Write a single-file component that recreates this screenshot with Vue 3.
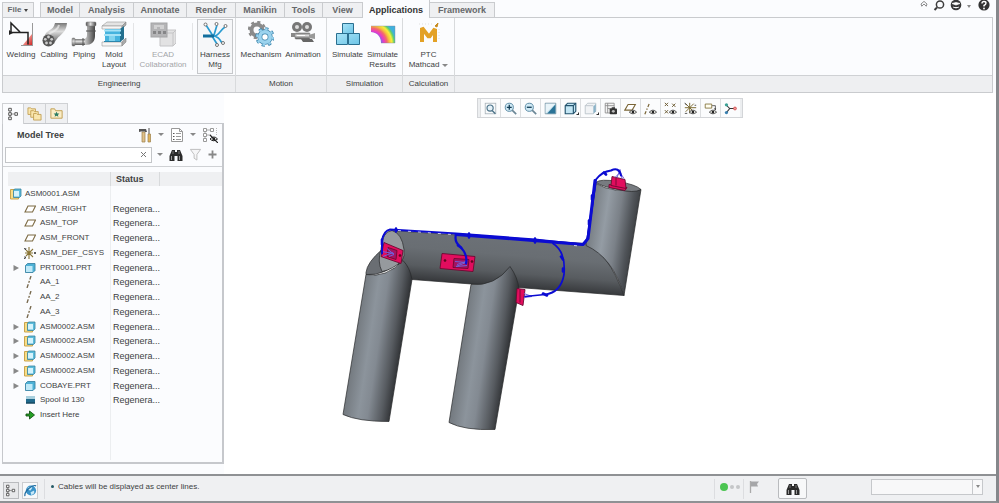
<script setup>
import { ref } from 'vue'

const tabs = [
  { name: 'Model', w: 40 }, { name: 'Analysis', w: 54 }, { name: 'Annotate', w: 53 },
  { name: 'Render', w: 49 }, { name: 'Manikin', w: 49 }, { name: 'Tools', w: 38 },
  { name: 'View', w: 40 }, { name: 'Applications', w: 67 }, { name: 'Framework', w: 65 },
]
const activeTab = ref('Applications')

const groups = [
  {
    title: 'Engineering', key: 'eng', items: [
      { lines: ['Welding'], icon: 'welding', w: 36 },
      { lines: ['Cabling'], icon: 'cabling', w: 30 },
      { lines: ['Piping'], icon: 'piping', w: 30 },
      { lines: ['Mold', 'Layout'], icon: 'mold', w: 30 },
      { sep: true },
      { lines: ['ECAD', 'Collaboration'], icon: 'ecad', w: 50, disabled: true },
      { sep: true },
      { lines: ['Harness', 'Mfg'], icon: 'harness', w: 36, boxed: true },
    ],
  },
  {
    title: 'Motion', key: 'mot', items: [
      { lines: ['Mechanism'], icon: 'gears', w: 44 },
      { lines: ['Animation'], icon: 'camera', w: 40 },
    ],
  },
  {
    title: 'Simulation', key: 'sim', items: [
      { lines: ['Simulate'], icon: 'cubes', w: 36 },
      { lines: ['Simulate', 'Results'], icon: 'rainbow', w: 34 },
    ],
  },
  {
    title: 'Calculation', key: 'calc', items: [
      { lines: ['PTC', 'Mathcad'], icon: 'mathcad', w: 46, menu: true },
    ],
  },
]

const viewTools = [
  ['refit', 'Refit'], ['zoomin', 'Zoom In'], ['zoomout', 'Zoom Out'], ['repaint', 'Repaint'],
  ['style', 'Display Style'], ['saved', 'Saved Orientations'], ['viewmgr', 'View Manager'],
  ['dplane', 'Plane Display'], ['daxis', 'Axis Display'], ['dpoint', 'Point Display'],
  ['dcsys', 'Csys Display'], ['dnote', 'Annotation Display'], ['spin', 'Spin Center'],
]

const st = 'Regenera...'
const rows = [
  { name: 'ASM0001.ASM', icon: 'asm', root: true, status: '' },
  { name: 'ASM_RIGHT', icon: 'plane', status: st },
  { name: 'ASM_TOP', icon: 'plane', status: st },
  { name: 'ASM_FRONT', icon: 'plane', status: st },
  { name: 'ASM_DEF_CSYS', icon: 'csys', status: st },
  { name: 'PRT0001.PRT', icon: 'part', status: st, open: true },
  { name: 'AA_1', icon: 'axis', status: st },
  { name: 'AA_2', icon: 'axis', status: st },
  { name: 'AA_3', icon: 'axis', status: st },
  { name: 'ASM0002.ASM', icon: 'asm', status: st, open: true },
  { name: 'ASM0002.ASM', icon: 'asm', status: st, open: true },
  { name: 'ASM0002.ASM', icon: 'asm', status: st, open: true },
  { name: 'ASM0002.ASM', icon: 'asm', status: st, open: true },
  { name: 'COBAYE.PRT', icon: 'part', status: st, open: true },
  { name: 'Spool id 130', icon: 'spool', status: st },
  { name: 'Insert Here', icon: 'insert', status: '' },
]
const query = ref('')
const filter = ref('')
</script>

<template>
  <div class="app">
    <svg class="defs" aria-hidden="true">
      <defs>
        <linearGradient id="gCube" x1="0" y1="0" x2="1" y2="1"><stop offset="0" stop-color="#a9e4f8" /><stop offset="1" stop-color="#6cc4e6" /></linearGradient>
        <linearGradient id="gMetal" x1="0" y1="0" x2="1" y2="0"><stop offset="0" stop-color="#555" /><stop offset=".45" stop-color="#ddd" /><stop offset="1" stop-color="#444" /></linearGradient>
        <linearGradient id="gMetalV" x1="0" y1="0" x2="0" y2="1"><stop offset="0" stop-color="#777" /><stop offset=".4" stop-color="#ddd" /><stop offset="1" stop-color="#555" /></linearGradient>
        <linearGradient id="gRed" x1="0" y1="0" x2="1" y2="1"><stop offset=".3" stop-color="#f7b0a8" /><stop offset="1" stop-color="#cf1f1f" /></linearGradient>
        <radialGradient id="gRain" gradientUnits="userSpaceOnUse" cx="1" cy="23" r="25"><stop offset=".3" stop-color="#5ac8f0" /><stop offset=".42" stop-color="#8a68e0" /><stop offset=".52" stop-color="#e83ac8" /><stop offset=".64" stop-color="#f26a6c" /><stop offset=".74" stop-color="#f6c23c" /><stop offset=".84" stop-color="#f8ee3c" /><stop offset=".93" stop-color="#5fd06a" /><stop offset="1" stop-color="#3fb0dd" /></radialGradient>
        <linearGradient id="gLeg" gradientUnits="userSpaceOnUse" x1="355" y1="344" x2="401" y2="351"><stop offset="0" stop-color="#757b81" /><stop offset=".3" stop-color="#8c949c" /><stop offset=".5" stop-color="#838a92" /><stop offset=".8" stop-color="#565a5f" /><stop offset="1" stop-color="#303235" /></linearGradient>
        <linearGradient id="gLeg2" gradientUnits="userSpaceOnUse" x1="460" y1="357" x2="507" y2="364"><stop offset="0" stop-color="#757b81" /><stop offset=".3" stop-color="#8c949c" /><stop offset=".5" stop-color="#838a92" /><stop offset=".8" stop-color="#565a5f" /><stop offset="1" stop-color="#303235" /></linearGradient>
        <linearGradient id="gRiser" gradientUnits="userSpaceOnUse" x1="591" y1="215" x2="637" y2="222"><stop offset="0" stop-color="#777d83" /><stop offset=".32" stop-color="#949ca4" /><stop offset=".6" stop-color="#7b8188" /><stop offset=".85" stop-color="#505459" /><stop offset="1" stop-color="#3c3f42" /></linearGradient>
        <linearGradient id="gBody" gradientUnits="userSpaceOnUse" x1="498" y1="237" x2="494" y2="287"><stop offset="0" stop-color="#6c7177" /><stop offset=".35" stop-color="#696e73" /><stop offset=".7" stop-color="#585c60" /><stop offset="1" stop-color="#35373a" /></linearGradient>
      </defs>

      <!-- ribbon icons, 26 x 26 -->
      <symbol id="welding" viewBox="0 0 26 26"><path d="M24 13v12H14z" fill="url(#gRed)" /><path d="M24.500 2v23M13 24.500h12" stroke="#999" fill="none" /><path d="M1 11.500h19v12M3 11V2l9 9" fill="none" stroke="#222" stroke-width="1.500" /><path d="M1 9v5l4-2z" fill="#222" /></symbol>
      <symbol id="cabling" viewBox="0 0 26 26"><path d="M3 16C6 7 12 11 14 2L26 2C25 14 17 13 13 23z" fill="url(#gMetalV)" /><path d="M8 13C11 10 16 11 18 4" stroke="#eee" stroke-width="2" fill="none" opacity=".7" /><circle cx="7.500" cy="19.500" r="6" fill="#555" /><g fill="#ccc"><circle cx="7.500" cy="16" r="1.400" /><circle cx="4.300" cy="18.300" r="1.400" /><circle cx="10.700" cy="18.300" r="1.400" /><circle cx="5.500" cy="22" r="1.400" /><circle cx="9.500" cy="22" r="1.400" /></g></symbol>
      <symbol id="piping" viewBox="0 0 26 26"><path d="M16 5h8v10c0 6-4 9-9 9H3v-6h9c2 0 4-1 4-4z" fill="url(#gMetal)" /><path d="M2 18h12v6H2z" fill="url(#gMetalV)" /><rect x="15" y="1" width="10" height="4" rx="1" fill="url(#gMetal)" stroke="#777" stroke-width=".5" /><rect x="1" y="17" width="3" height="8" rx="1" fill="url(#gMetalV)" stroke="#777" stroke-width=".5" /><path d="M15 10h10M12 17v8" stroke="#555" /></symbol>
      <symbol id="mold" viewBox="0 0 26 26"><path d="M1 5l5-4h19l-4 4z" fill="#e4e4e4" stroke="#999" stroke-width=".6" /><path d="M1 5h20v3H1zM1 21h20v4H1z" fill="#f6f6f6" stroke="#999" stroke-width=".6" /><path d="M21 5l4-4v3l-4 4zM21 21l4-4v4l-4 4z" fill="#aaa" stroke="#888" stroke-width=".6" /><path d="M4 8h15v13H4z" fill="#45b3de" /><path d="M19 8l4-3v13l-4 3z" fill="#23708f" /><path d="M3 9.500h17M3 14h17" stroke="#a5e2f6" stroke-width="2" /><path d="M3 20.500h17" stroke="#2c86ac" /><path d="M8 15h6v5H8z" fill="#82d4ef" /></symbol>
      <symbol id="ecad" viewBox="0 0 26 26"><path d="M10 12l4-3h12v13l-3 3H10z" fill="#e2e2e3" stroke="#c4c4c6" /><path d="M10 12h13v13M23 12l3-3" fill="none" stroke="#c4c4c6" /><rect x="1" y="2" width="16" height="14" fill="#b4b4b6" stroke="#a4a4a6" /><path d="M4 5h10M4 7h3m3 0h4" stroke="#eee" /><path d="M3 10h3v3H3zM8 10h3v3H8zM13 10h3v3h-3z" fill="#858587" /></symbol>
      <symbol id="harness" viewBox="0 0 26 26"><path d="M1 15h11c5 0 6-6 11-9M11 15L4 4M12 14L15 4M11 15c4 0 7 3 9 7M10 15l5 8" fill="none" stroke="#2a9bd0" stroke-width="1.700" /><path d="M1 15h11" stroke="#126e9d" stroke-width="3" /><g fill="#fff" stroke="#666" stroke-width=".9"><circle cx="3.500" cy="3.500" r="1.500" /><circle cx="14.500" cy="3" r="1.500" /><circle cx="23.500" cy="5" r="1.500" /><circle cx="21" cy="22" r="1.500" /><circle cx="15" cy="24" r="1.500" /></g></symbol>
      <symbol id="gears" viewBox="0 0 26 26"><circle cx="9" cy="9" r="5.500" fill="none" stroke="#8b8b8b" stroke-width="4" /><circle cx="9" cy="9" r="8" fill="none" stroke="#8b8b8b" stroke-width="2.400" stroke-dasharray="3.140 3.140" /><circle cx="17" cy="16" r="8.200" fill="none" stroke="#3b83ab" stroke-width="3" stroke-dasharray="3.200 3.230" /><circle cx="17" cy="16" r="5.200" fill="#fff" stroke="#3b83ab" stroke-width="5" /><circle cx="17" cy="16" r="5.200" fill="none" stroke="#9bd3ee" stroke-width="3.600" /><circle cx="17" cy="16" r="7.900" fill="none" stroke="#9bd3ee" stroke-width="2" stroke-dasharray="2.500 3.700" /></symbol>
      <symbol id="camera" viewBox="0 0 26 26"><circle cx="7" cy="6" r="5" fill="#777" /><circle cx="17" cy="6" r="5" fill="#777" /><circle cx="7" cy="6" r="2" fill="#ddd" /><circle cx="17" cy="6" r="2" fill="#ddd" /><rect x="5" y="12" width="15" height="6" rx="1" fill="url(#gMetalV)" stroke="#777" stroke-width=".6" /><path d="M19 14l6-2v6l-6-1z" fill="#999" /><path d="M1 12h4v4H1z" fill="#888" /><path d="M11 18h11l2 3H13z" fill="#666" /><path d="M7 14.500h8" stroke="#fff" /></symbol>
      <symbol id="cubes" viewBox="0 0 26 26"><g fill="url(#gCube)" stroke="#2a6f90"><path d="M7.500 2.500h11v10h-11z" /><path d="M1.500 12.500h11v11h-11zM13.500 12.500h11v11h-11z" /></g></symbol>
      <symbol id="rainbow" viewBox="0 0 26 26"><path d="M1 5h24v17H11c0-6-3-10-10-11z" fill="url(#gRain)" /><path d="M1 5h24v17H11" stroke="#889" fill="none" opacity=".4" /></symbol>
      <symbol id="mathcad" viewBox="0 0 26 26"><path d="M6 21V7l7 9 6-8v13" fill="none" stroke="#e3a126" stroke-width="4" stroke-linejoin="bevel" /><path d="M19 5l3-3-1 4z" fill="#c78a1e" stroke="#c78a1e" /><path d="M3 3h14M23 8v12" stroke="#ccc" stroke-width=".6" stroke-dasharray="1 2" /></symbol>

      <!-- view toolbar icons, 16 x 16 -->
      <symbol id="refit" viewBox="0 0 16 16"><rect x="1.500" y="1.500" width="13" height="13" fill="#f8fafb" stroke="#a9b3ba" /><circle cx="7.500" cy="7.500" r="3.800" fill="#e4f1f8" stroke="#4c7389" stroke-width="1.400" /><path d="M10 10.500l4 4" stroke="#4c7389" stroke-width="1.800" /></symbol>
      <symbol id="zoomin" viewBox="0 0 16 16"><circle cx="6.500" cy="6.500" r="5" fill="#cfe9f5" stroke="#5b8ba5" stroke-width="1.200" /><path d="M10 10l5 5" stroke="#6b8796" stroke-width="2" /><path d="M3.500 6.500h6M6.500 3.500v6" stroke="#123d55" stroke-width="1.600" /></symbol>
      <symbol id="zoomout" viewBox="0 0 16 16"><circle cx="6.500" cy="6.500" r="5" fill="#cfe9f5" stroke="#5b8ba5" stroke-width="1.200" /><path d="M10 10l5 5" stroke="#6b8796" stroke-width="2" /><path d="M3.500 6.500h6" stroke="#123d55" stroke-width="1.600" /></symbol>
      <symbol id="repaint" viewBox="0 0 16 16"><path d="M1.500 1.500h13v13h-13z" fill="#bfdfec" stroke="#6d8b9a" /><path d="M2 2h12L2 14z" fill="#e9f4f9" /><path d="M14 3v11H4z" fill="#2a7397" /></symbol>
      <symbol id="style" viewBox="0 0 16 16"><path d="M1.500 4.500l3-3h10v10l-3 3h-10z" fill="#c3e6f4" stroke="#23536d" stroke-width="1.400" /><path d="M1.500 4.500h10v10M11.500 4.500l3-3" fill="none" stroke="#23536d" stroke-width="1.400" /></symbol>
      <symbol id="saved" viewBox="0 0 16 16"><path d="M1.500 4.500l3-3h10v10l-3 3h-10z" fill="#f1f3f5" stroke="#b5bfc5" /><path d="M11.500 5.500v9l3-3v-9z" fill="#8bb3c8" /><path d="M1.500 4.500h10" stroke="#b6bfc5" /></symbol>
      <symbol id="viewmgr" viewBox="0 0 16 16"><path d="M1.500 1.500h11v12h-11zM1.500 4.500h11M4.500 1.500v12M4.500 8h8" fill="#f4f4f4" stroke="#888" /><rect x="7" y="8" width="9" height="7" rx="1" fill="#333" /><path d="M9.500 6.500h4v2h-4z" fill="#333" /><circle cx="11.500" cy="11.500" r="1.800" fill="#bbb" /></symbol>
      <symbol id="eye" viewBox="0 0 16 16"><path d="M6.500 12.500q4.500-5 9 0q-4.500 4-9 0z" fill="#f5f5ee" stroke="#444" stroke-width="1.100" /><circle cx="11" cy="12.300" r="1.600" fill="#222" /></symbol>
      <symbol id="dplane" viewBox="0 0 16 16"><path d="M1 10L5 3h9l-4 7z" fill="#fff" stroke="#7a6536" stroke-width="1.300" /><use href="#eye" /></symbol>
      <symbol id="daxis" viewBox="0 0 16 16"><path d="M1 15L7 1" stroke="#7a6536" stroke-width="1.500" stroke-dasharray="4 2 1.500 2" /><use href="#eye" /></symbol>
      <symbol id="dpoint" viewBox="0 0 16 16"><path d="M1 1l4 4M5 1L1 5M10 2l4 4M14 2l-4 4M1 10l4 4M5 10l-4 4" stroke="#6e5e35" stroke-width="1.200" /><use href="#eye" /></symbol>
      <symbol id="dcsys" viewBox="0 0 16 16"><path d="M7 1v13M1 7h14M2 2l10 10M12 2L2 12" stroke="#7b6a30" stroke-width="1.200" /><path d="M1 1l2 3M13 4h2M1 14h3" stroke="#333" /><use href="#eye" /></symbol>
      <symbol id="dnote" viewBox="0 0 16 16"><path d="M1.500 2.500h8v5h-8z" fill="#fffef0" stroke="#7b6a30" /><path d="M10 4.500h4v5" fill="none" stroke="#444" /><path d="M12 8l2 2 1-2z" fill="#333" /><use href="#eye" /></symbol>
      <symbol id="spin" viewBox="0 0 16 16"><path d="M3 4l4 4-4 5M7 8h6" fill="none" stroke="#333" stroke-width="1.300" /><circle cx="3" cy="3.500" r="2" fill="#3aa095" /><circle cx="3" cy="13" r="2" fill="#3a80b0" /><circle cx="13.500" cy="8" r="1.800" fill="#e99" stroke="#c33" stroke-width=".8" /></symbol>

      <!-- tree icons, 12 x 12 -->
      <symbol id="asm" viewBox="0 0 12 12"><path d="M.5 1.500h8v9.500h-8z" fill="#f9dd86" stroke="#c9a44c" /><path d="M3.500 2.500l1-1.500h6.500v7l-1.500 1.500H3.500z" fill="#5cbcdc" stroke="#37839f" stroke-width=".8" /><path d="M4 3h5v5.500H4z" fill="#d5f3fc" /></symbol>
      <symbol id="part" viewBox="0 0 12 12"><path d="M1.500 3.500l2-2h7.500v7L9 10.500H1.500z" fill="#4eb1d6" stroke="#3c86a6" stroke-width=".9" /><path d="M2 4h6.500v6H2z" fill="#bfe9f8" /></symbol>
      <symbol id="plane" viewBox="0 0 12 12"><path d="M1 9L4 3h7.500l-3 6z" fill="#fff" stroke="#7c6a43" stroke-width="1.100" /></symbol>
      <symbol id="axis" viewBox="0 0 12 12"><path d="M3 12L7 0" stroke="#75664a" stroke-width="1.300" stroke-dasharray="4 1.500 2 1.500" /></symbol>
      <symbol id="csys" viewBox="0 0 12 12"><path d="M5 0v12M1 6h8M2 3l7 7M9 2L2 9" stroke="#8a7637" stroke-width="1.100" /><path d="M0 1l2 2M2 1L1 3M0 10h2l-2 2h2M10 5l2 2M12 5l-2 2" stroke="#333" stroke-width=".8" fill="none" /></symbol>
      <symbol id="spool" viewBox="0 0 12 12"><path d="M2 2.500h9v7H2z" fill="#216a8c" /><path d="M2 2h9v3H2z" fill="#a9cfdd" /><path d="M2 9h9" stroke="#12394c" /></symbol>
      <symbol id="insert" viewBox="0 0 12 12"><path d="M2 5h3.500V2L10.500 6l-5 4V7H2z" fill="#25a025" stroke="#145214" stroke-width=".9" /></symbol>

      <!-- panel icons -->
      <symbol id="tree" viewBox="0 0 14 16"><path d="M3 3v10M3 8h5" stroke="#888" /><g fill="#fff" stroke="#444"><path d="M1.500 1.500h3v3h-3zM1.500 6.500h3v3h-3zM1.500 11.500h3v3h-3zM8.500 6.500h3v3h-3z" /></g></symbol>
      <symbol id="folders" viewBox="0 0 16 16"><g fill="#f9e6ae" stroke="#c09d50" stroke-width=".9"><path d="M1 9V2h3l1 1h4v6z" /><path d="M4 12V5h3l1 1h4v6z" /><path d="M7 15V8h3l1 1h4v6z" /></g></symbol>
      <symbol id="favs" viewBox="0 0 16 16"><path d="M2 13V3h4l1 2h7v8z" fill="#faedc6" stroke="#c09d50" /><path d="M8 6l1 2h2L9.500 9.500l.5 2-2-1-2 1 .5-2L5 8h2z" fill="#2e7d63" /></symbol>
      <symbol id="tools" viewBox="0 0 14 16"><path d="M4 5h3v10H4z" fill="#dfc08a" stroke="#9c8048" stroke-width=".7" /><path d="M1 2h7l1 3H7V4.500H3L1 5z" fill="#555" /><path d="M11 1v7" stroke="#888" stroke-width="1.500" /><path d="M10 7h2.500v8H10z" fill="#e0b45c" stroke="#9c8048" stroke-width=".7" /></symbol>
      <symbol id="list" viewBox="0 0 14 16"><path d="M1.500 1.500h8l3 3v10h-11z" fill="#fff" stroke="#999" /><path d="M9.500 1.500v3h3" fill="none" stroke="#999" /><path d="M3 6.500h1.500M3 9.500h1.500M3 12.500h1.500" stroke="#555" /><path d="M6 6.500h5M6 9.500h5M6 12.500h5" stroke="#999" /></symbol>
      <symbol id="treehide" viewBox="0 0 16 16"><path d="M3 3v10M5 3h4M5 8h4" stroke="#aaa" /><g fill="#fff" stroke="#999"><path d="M1.500 1.500h3v3h-3zM1.500 6.500h3v3h-3zM1.500 11.500h3v3h-3zM8.500 1.500h3v3h-3z" /></g><path d="M14.500 1v7" stroke="#bbb" stroke-dasharray="1 1" /><path d="M8 12q4-4 7.500 0q-4 3.500-7.500 0z" fill="#fff" stroke="#222" /><circle cx="11.800" cy="12" r="1.500" fill="#222" /><path d="M8 8l8 8" stroke="#222" stroke-width="1.200" /></symbol>
      <symbol id="bino" viewBox="0 0 14 14"><path d="M3 2h3v2h2V2h3l2.500 6v5H8.500V8h-3v5H.5V8z" fill="#2b2b2b" /><path d="M2.500 8v4M10.500 8v4" stroke="#999" /><path d="M4 3v3M10 3v3" stroke="#777" /></symbol>
      <symbol id="funnel" viewBox="0 0 14 14"><path d="M1.500 1.500h11L8.500 7v6l-3-2V7z" fill="#f6f6f7" stroke="#bbb" /></symbol>
      <symbol id="web" viewBox="0 0 14 14"><circle cx="7.500" cy="7" r="5.500" fill="#3a93c9" /><path d="M4 4q3-2 5 0l-2 3q-3 0-3-3zM7 9l4-2v3l-3 2z" fill="#c8e8f7" /><path d="M1 13C0 8 9 0 13 2" fill="none" stroke="#1f6ca0" stroke-width="1.300" /></symbol>
      <symbol id="chev" viewBox="0 0 10 8"><path d="M1 4l4-3.500L9 4M2 7l3-3 3 3M1 4l1 3M9 4L8 7" fill="none" stroke="#555" stroke-width=".9" /></symbol>
      <symbol id="search" viewBox="0 0 12 12"><circle cx="7" cy="4.500" r="3.600" fill="none" stroke="#3d3d3d" stroke-width="1.500" /><path d="M4 7.500L1.500 10" stroke="#3d3d3d" stroke-width="2" /></symbol>
      <symbol id="learn" viewBox="0 0 12 12"><circle cx="6" cy="5" r="5.300" fill="#383838" /><path d="M2 3.500l4 1.500 4-1.500-4-1zM3 7q3 2 6 0" fill="#fff" stroke="#fff" stroke-width=".7" /></symbol>
      <symbol id="help" viewBox="0 0 12 12"><circle cx="6" cy="5" r="5.600" fill="#333" /><path d="M4 3.500q0-2 2-2t2 1.600Q8 4.500 6 5.500v1" fill="none" stroke="#fff" stroke-width="1.400" /><circle cx="6" cy="8.500" r=".9" fill="#fff" /></symbol>
      <symbol id="flag" viewBox="0 0 12 14"><path d="M1.500 1v12" stroke="#aaa" stroke-width="1.300" /><path d="M2 1.500h8L8 4l1 2.500H2z" fill="#a5a6a8" /></symbol>
    </svg>

    <header class="tabbar">
      <button class="file" type="button">File<i class="tri dark"></i></button>
      <nav class="tabs">
        <button v-for="t in tabs" :key="t.name" type="button" class="tab" :class="{ active: t.name === activeTab }"
          :style="{ width: t.w + 'px' }" @click="activeTab = t.name">{{ t.name }}</button>
      </nav>
      <div class="quick">
        <button type="button" aria-label="Minimize ribbon"><svg width="8" height="6"><use href="#chev" /></svg></button>
        <button type="button" aria-label="Search commands"><svg width="12" height="12"><use href="#search" /></svg></button>
        <button type="button" class="learn" aria-label="Learning connector"><svg width="12" height="12"><use href="#learn" /></svg><i class="tri"></i></button>
        <button type="button" aria-label="Help"><svg width="12" height="12"><use href="#help" /></svg></button>
      </div>
    </header>

    <section class="ribbon">
      <div v-for="g in groups" :key="g.key" class="group" :class="g.key">
        <div class="items">
          <template v-for="(it, i) in g.items" :key="i">
            <span v-if="it.sep" class="sep"></span>
            <button v-else type="button" class="cmd" :class="{ boxed: it.boxed }" :disabled="it.disabled" :style="{ width: it.w + 'px' }">
              <svg width="26" height="26"><use :href="'#' + it.icon" /></svg>
              <span v-for="(l, n) in it.lines" :key="n" class="line">{{ l }}<i v-if="it.menu && n === 1" class="tri"></i></span>
            </button>
          </template>
        </div>
        <div class="gtitle">{{ g.title }}</div>
      </div>
      <div class="group rest"><div class="items"></div><div class="gtitle"></div></div>
    </section>

    <main class="work">
      <aside class="side">
        <div class="stabs">
          <button type="button" class="stab on" aria-label="Model tree"><svg width="13" height="14"><use href="#tree" /></svg></button>
          <button type="button" class="stab" aria-label="Folder browser"><svg width="15" height="15"><use href="#folders" /></svg></button>
          <button type="button" class="stab" aria-label="Favorites"><svg width="15" height="15"><use href="#favs" /></svg></button>
        </div>
        <div class="panel">
          <div class="phead">
            <h2>Model Tree</h2>
            <button type="button" aria-label="Settings"><svg width="14" height="16"><use href="#tools" /></svg></button>
            <i class="tri"></i>
            <button type="button" aria-label="Show"><svg width="14" height="16"><use href="#list" /></svg></button>
            <i class="tri"></i>
            <button type="button" aria-label="Hide tree"><svg width="16" height="16"><use href="#treehide" /></svg></button>
          </div>
          <div class="psearch">
            <div class="sbox">
              <input v-model="query" type="text" aria-label="Search tree" />
              <button type="button" aria-label="Clear" @click="query = ''"><svg width="7" height="7" viewBox="0 0 7 7"><path d="M1 1l5 5M6 1l-5 5" stroke="#777" /></svg></button>
            </div>
            <i class="tri"></i>
            <button type="button" aria-label="Find"><svg width="14" height="14"><use href="#bino" /></svg></button>
            <button type="button" aria-label="Filter"><svg width="13" height="13"><use href="#funnel" /></svg></button>
            <button type="button" aria-label="Add"><svg width="9" height="9" viewBox="0 0 9 9"><path d="M4.500.5v8M.5 4.500h8" stroke="#888" stroke-width="1.800" /></svg></button>
          </div>
          <div class="twrap">
            <table class="tree">
              <colgroup><col class="c1" /><col class="c2" /><col /></colgroup>
              <thead><tr><th aria-label="Name"></th><th>Status</th><th class="blank"></th></tr></thead>
              <tbody>
                <tr v-for="(r, i) in rows" :key="i">
                  <td>
                    <div class="node" :class="{ root: r.root }">
                      <span v-if="!r.root" class="exp"><svg v-if="r.open" width="6" height="6" viewBox="0 0 6 6"><path d="M.5 0L6 3 .5 6z" fill="#888" /></svg></span>
                      <svg width="12" height="12"><use :href="'#' + r.icon" /></svg>
                      <span>{{ r.name }}</span>
                    </div>
                  </td>
                  <td class="stat" colspan="2">{{ r.status }}</td>
                </tr>
              </tbody>
            </table>
            <div class="tfill"><span></span></div>
          </div>
        </div>
      </aside>

      <section class="view">
        <div class="vtools">
          <button v-for="t in viewTools" :key="t[0]" type="button" :aria-label="t[1]">
            <svg width="13" height="13"><use :href="'#' + t[0]" /></svg>
            <i v-if="t[0] === 'style' || t[0] === 'saved'" class="corner"></i>
          </button>
        </div>
        <svg class="scene" viewBox="224 119 772 355" preserveAspectRatio="xMidYMid meet" role="img" aria-label="Pipe assembly with harness">
          <g stroke="#26282a" stroke-width=".7" stroke-linejoin="round">
            <path d="M391 231L585 244Q608 252 624 296L412 280L395 262z" fill="url(#gBody)" />
            <path d="M586 246L596 184Q612 194 641 190L624 296Q613 258 586 246z" fill="url(#gRiser)" />
            <path d="M596 183Q600 179 618 182Q636 185 641 190Q634 194 618 190Q602 187 596 183z" fill="#777b80" />
            <path d="M366 273Q367 263 382 250L404 258Q385 277 366 275z" fill="#6a6e73" />
            <path d="M381 250Q382 232 392 231Q402 234 404 250Q405 257 402 261Q393 270 382 272Q377 262 381 250z" fill="#969a9e" />
            <path d="M366 275Q386 279 403 261Q410 268 412 280L389 422Q358 422 343 415z" fill="url(#gLeg)" />
            <path d="M471 285Q495 287 510 267Q518 278 519 290L495 430Q464 431 449 423z" fill="url(#gLeg2)" />
          </g>
          <g fill="#e20d5e" stroke="#6d0931" stroke-width=".9" stroke-linejoin="round">
            <path d="M384 243L403 251L401 264L381 257z" />
            <path d="M442 254L475 257L473 272L440 269z" />
            <path d="M517 289L525 290L523 306L516 303z" />
            <path d="M609 185L627 188L625 191L609 188z" />
            <path d="M612 177L625 180L626 189L611 186z" />
            <path d="M388 248l9 3-1 9-9-3zM454 259l15 1-1 9-15-1z" fill="#a31361" />
            <path d="M616 178v8M520 290v13" />
            <circle cx="445" cy="261" r="1" fill="#500" /><circle cx="472" cy="262" r="1" fill="#500" /><circle cx="400" cy="256" r="1" fill="#500" />
          </g>
          <g fill="none" stroke="#7061da" stroke-width="1">
            <path d="M382 252l12 2M383 257l10-4M387 249l7 6-5 2M455 262l11 1-10 4 11-1M457 265l9-3M615 178l5-5 4 6M617 178l3-8 2 9M524 294l8 3-8 1" />
          </g>
          <g fill="none" stroke="#0b0bd2" stroke-linejoin="round" stroke-linecap="round">
            <path d="M382 254L382 241Q384 231 390 230L456 234L535 240L582 245Q587 244 588 235L592 208L596 180Q602 172 611 171Q619 167 621 176" stroke-width="2" />
            <path d="M456 235L583 245L588 239L595 181" stroke-width="3" />
            <path d="M456 235Q454 242 460 247Q468 255 466 264" stroke-width="2.200" />
            <path d="M553 244Q566 252 564 275Q561 293 545 295L525 297" stroke-width="1.700" />
            <path d="M382 240v5M396 229v3M469 234v4M535 239v4M561 257l2 3M563 269v3M543 294l4 2M592 196v4M589 221v4M604 173l2 2M458 246l3 2" stroke-width="2.600" />
          </g>
          <path d="M398 231L452 235M574 246L584 247" stroke="#e8e8ff" stroke-width=".8" stroke-dasharray="3 7" />
        </svg>
      </section>
    </main>

    <footer class="status">
      <button type="button" class="sbtn pressed" aria-label="Toggle tree"><svg width="12" height="13"><use href="#tree" /></svg></button>
      <button type="button" class="sbtn" aria-label="Toggle browser"><svg width="13" height="13"><use href="#web" /></svg></button>
      <span class="vsep"></span>
      <p class="msg"><span class="bullet"></span>Cables will be displayed as center lines.</p>
      <span class="vsep"></span>
      <span class="lights"><i class="go"></i><i></i><i></i></span>
      <span class="vsep"></span>
      <svg class="flag" width="12" height="14"><use href="#flag" /></svg>
      <button type="button" class="find" aria-label="Find"><svg width="14" height="14"><use href="#bino" /></svg></button>
      <div class="combo">
        <select v-model="filter" aria-label="Selection filter"><option value=""></option></select>
        <span class="drop"><i class="tri"></i></span>
      </div>
    </footer>
  </div>
</template>

<style>
body { margin: 0; background: #fff; }
</style>

<style scoped>
.app {
  box-sizing: border-box;
  min-height: 100vh;
  display: flex;
  flex-direction: column;
  font: 8px/10px "Liberation Sans", Arial, sans-serif;
  color: #3d3f42;
  background: #fbfcfe;
  border-right: 3px solid #85878b;
  border-bottom: 2px solid #8f9194;
}
.defs { position: absolute; width: 0; height: 0; }
button {
  font: inherit;
  color: inherit;
  margin: 0;
  padding: 0;
  border: 0;
  background: none;
  display: flex;
  align-items: center;
  justify-content: center;
}
svg { display: block; flex: none; }
.tri {
  display: inline-block;
  border: 3px solid transparent;
  border-top-color: #888;
  border-bottom: 0;
}
.tri.dark { border-width: 3px 2px 0; border-top-color: #444; margin-left: 3px; }

.tabbar { display: flex; height: 17px; padding-left: 2px; }
.file, .tab {
  box-sizing: border-box;
  margin-top: 2px;
  height: 15px;
  font-weight: bold;
  background: #eff0f2;
  border: 1px solid #c9cbce;
  border-bottom: 0;
  color: #66686b;
}
.file { width: 32px; margin-right: 6px; }
.tabs { display: flex; }
.tab { font-size: 9px; border-left: 0; }
.tab:first-child { border-left: 1px solid #c9cbce; }
.tab.active {
  height: 18px;
  margin: 0 0 -1px;
  padding-top: 2px;
  border-top: 0;
  background: #fbfcfe;
  color: #333;
  position: relative;
}
.quick { display: flex; align-items: flex-start; gap: 5px; margin-left: auto; padding-right: 6px; }
.quick button:first-child { padding-top: 1px; }
.learn .tri { margin-left: 5px; border-width: 3px 2px 0; }
.quick button:last-child { margin-left: 2px; }

.ribbon {
  display: flex;
  margin: 0 3px 0 2px;
  border: 1px solid #c9cbce;
}
.group { display: flex; flex-direction: column; border-right: 1px solid #d8dadc; }
.eng { width: 232px; }
.mot { width: 90px; }
.sim { width: 75px; }
.calc { width: 51px; }
.rest { flex: 1; border-right: 0; }
.items { display: flex; height: 57px; justify-content: center; }
.eng .items { justify-content: flex-start; }
.gtitle {
  box-sizing: border-box;
  height: 17px;
  border-top: 1px solid #cfd1d4;
  background: #eeeff1;
  text-align: center;
  line-height: 16px;
}
.cmd { flex-direction: column; justify-content: flex-start; padding-top: 3px; white-space: nowrap; flex: none; }
.cmd svg { margin-bottom: 3px; }
.cmd:disabled { color: #a3a5a8; }
.line { display: flex; align-items: center; gap: 3px; }
.boxed { box-sizing: border-box; margin-top: 1px; height: 55px; padding-top: 1px; border: 1px solid #c6c8cb; background: #f6f7f9; }
.sep { width: 1px; margin: 5px 4px; background: #e3e4e6; }

.work { flex: 1; display: flex; }
.side { width: 222px; flex: none; display: flex; flex-direction: column; padding: 10px 0 10px 2px; }
.stabs { display: flex; height: 20px; }
.stab {
  box-sizing: border-box;
  width: 22px;
  border: 1px solid #cfd1d4;
  border-left: 0;
  border-bottom: 0;
  background: #eff0f2;
}
.stab.on { background: #fbfcfe; border-left: 1px solid #cfd1d4; position: relative; margin-bottom: -1px; }
.panel { flex: 1; display: flex; flex-direction: column; border: 1px solid #c6c8cc; border-right: 2px solid #c6c8cc; border-bottom: 2px solid #c6c8cc; }
.phead { display: flex; align-items: center; height: 21px; gap: 6px; padding: 0 4px 0 14px; }
h2 { margin: 0 auto 0 0; font-size: 9px; line-height: 12px; }
.psearch { display: flex; align-items: center; height: 19px; padding: 0 5px 2px 2px; gap: 5px; border-bottom: 1px solid #cfd1d4; }
.psearch > button { margin-left: 1px; }
.sbox { box-sizing: border-box; flex: 1; min-width: 0; display: flex; height: 16px; border: 1px solid #c3c5c8; background: #fff; padding-right: 4px; }
.sbox input { flex: 1; min-width: 0; border: 0; padding: 0 3px; font: inherit; background: none; outline: 0; }
.twrap { flex: 1; display: flex; flex-direction: column; padding: 5px 0 2px 5px; }
.tfill { flex: 1; display: flex; }
.tfill span { box-sizing: border-box; width: 103px; border-right: 1px solid #eceef0; }
.tree { width: 100%; height: 250px; table-layout: fixed; border-collapse: separate; border-spacing: 0; }
.c1 { width: 103px; }
.c2 { width: 49px; }
.tree tr { height: 14px; }
.tree th { padding: 0 0 0 5px; font-size: 9px; text-align: left; background: #eff0f2; border-right: 1px solid #d8dadc; }
.tree th.blank { border-right: 0; }
.tree td { padding: 1px 0 0; white-space: nowrap; border-right: 1px solid #eceef0; }
.tree td.stat { font-size: 9px; padding-left: 2px; border-right: 0; }
.node { display: flex; align-items: center; gap: 4px; padding-left: 5px; height: 12px; }
.node.root { padding-left: 2px; gap: 3px; }
.exp { width: 7px; }

.view { flex: 1; min-width: 0; display: flex; flex-direction: column; background: #fff; padding-top: 5px; }
.vtools { display: flex; margin: 0 auto; height: 20px; box-sizing: border-box; border: 1px solid #d3d5d8; padding: 0 2px; background: #eceef0; }
.vtools button { box-sizing: border-box; width: 20px; background: #fbfcfd; border-left: 1px solid #dcdee0; position: relative; }
.corner { position: absolute; right: 1px; bottom: 2px; border: 1px solid #333; border-left-color: transparent; border-top-color: transparent; width: 1px; height: 1px; }
.scene { flex: 1; width: 100%; min-height: 0; }

.status { display: flex; align-items: center; height: 25px; border-top: 2px solid #8f9194; background: #eff0f2; padding: 0 13px 0 3px; }
.sbtn { box-sizing: border-box; width: 16px; height: 17px; margin: 3px 3px 0 0; border: 1px solid #cbcdd0; background: #f8f9fa; }
.pressed { border-color: #b9bbbe; background: #e8e9eb; }
.vsep { width: 1px; height: 20px; margin-left: 3px; background: #dcdde0; }
.msg { flex: 1; margin: 0 0 4px 6px; display: flex; align-items: center; gap: 4px; }
.bullet { width: 3px; height: 3px; border-radius: 50%; background: #255a66; }
.lights { display: flex; align-items: center; gap: 2px; margin: 0 0 4px 5px; }
.lights i { width: 4px; height: 4px; border-radius: 50%; background: #c4c6c8; }
.lights .go { width: 8px; height: 8px; background: #4cc552; }
.flag { margin: 0 17px 4px 5px; }
.find { width: 29px; height: 21px; box-sizing: border-box; border: 1px solid #b9bbbe; border-radius: 2px; background: #f7f8f9; }
.combo { position: relative; margin: 0 0 4px 64px; width: 112px; height: 16px; }
.combo select { appearance: none; box-sizing: border-box; width: 100%; height: 100%; border: 1px solid #c6c8cb; border-radius: 0; background: #f8f8f9; font: inherit; }
.drop { position: absolute; right: 0; top: 0; bottom: 0; width: 10px; border-left: 1px solid #c6c8cb; display: flex; align-items: center; justify-content: center; pointer-events: none; }
.drop .tri { border-width: 3px 2px 0; }
</style>
